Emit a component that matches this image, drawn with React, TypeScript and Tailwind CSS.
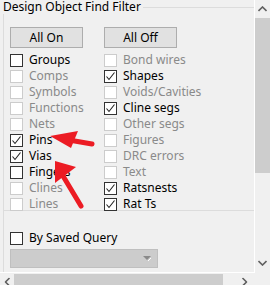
import React from "react";

type Item = { label: string; checked?: boolean; disabled?: boolean };

const leftItems: Item[] = [
  { label: "Groups" },
  { label: "Comps", disabled: true },
  { label: "Symbols", disabled: true },
  { label: "Functions", disabled: true },
  { label: "Nets", disabled: true },
  { label: "Pins", checked: true },
  { label: "Vias", checked: true },
  { label: "Fingers" },
  { label: "Clines", disabled: true },
  { label: "Lines", disabled: true },
];

const rightItems: Item[] = [
  { label: "Bond wires", disabled: true },
  { label: "Shapes", checked: true },
  { label: "Voids/Cavities", disabled: true },
  { label: "Cline segs", checked: true },
  { label: "Other segs", disabled: true },
  { label: "Figures", disabled: true },
  { label: "DRC errors", disabled: true },
  { label: "Text", disabled: true },
  { label: "Ratsnests", checked: true },
  { label: "Rat Ts", checked: true },
];

function CheckBox({ checked, disabled }: { checked?: boolean; disabled?: boolean }) {
  return (
    <span
      className={
        "flex size-[13px] shrink-0 items-center justify-center border bg-white " +
        (disabled ? "border-[#cccccc]" : "border-[#333333]")
      }
    >
      {checked ? (
        <svg width="11" height="11" viewBox="0 0 11 11" fill="none">
          <path d="M1.5 5.5 L4 8.5 L9.5 1.5" stroke="#222" strokeWidth="1.1" />
        </svg>
      ) : null}
    </span>
  );
}

function CheckRow({ item }: { item: Item }) {
  return (
    <div className="flex h-[16px] items-center gap-[6px]">
      <CheckBox checked={item.checked} disabled={item.disabled} />
      <span className={item.disabled ? "text-[#8a8a8a]" : "text-black"}>{item.label}</span>
    </div>
  );
}

function WinButton({ label }: { label: string }) {
  return (
    <button
      type="button"
      className="flex h-[21px] w-[73px] items-center justify-center border border-[#adadad] bg-[#e1e1e1] text-black"
    >
      {label}
    </button>
  );
}

function Chevron({ rotate }: { rotate: string }) {
  return (
    <svg width="9" height="6" viewBox="0 0 9 6" className={rotate}>
      <path d="M0.5 5 L4.5 1 L8.5 5" stroke="#606060" strokeWidth="1.6" fill="none" />
    </svg>
  );
}

function RedArrows() {
  return (
    <svg
      className="pointer-events-none absolute left-0 top-0"
      width="270"
      height="285"
      viewBox="0 0 270 285"
    >
      <line x1="66" y1="139.5" x2="92" y2="144" stroke="#ec1c24" strokeWidth="5" strokeLinecap="round" />
      <polygon points="50,136 78,131 71,148" fill="#ec1c24" />
      <line x1="63" y1="176" x2="81" y2="206" stroke="#ec1c24" strokeWidth="5" strokeLinecap="round" />
      <polygon points="55,161 76,167 55,183" fill="#ec1c24" />
    </svg>
  );
}

export default function App() {
  return (
    <div
      className="relative grid h-[285px] w-[270px] grid-cols-[255px_15px] grid-rows-[273px_12px] overflow-hidden bg-[#f0f0f0] text-[12px] leading-[16px]"
      style={{ fontFamily: '"Noto Sans", "Open Sans", sans-serif' }}
    >
      <div className="flex flex-col border-r border-b border-white">
        <div className="flex h-[14px] items-center">
          <span className="pl-[3px] pr-[2px] leading-[14px] text-black">Design Object Find Filter</span>
          <span className="mt-[1px] h-px flex-1 bg-[#dcdcdc]" />
        </div>
        <div className="ml-[3px] flex h-[197px] flex-col border-l border-b border-[#dcdcdc] pl-[6px] pt-[13px]">
          <div className="grid grid-cols-[94px_94px]">
            <WinButton label="All On" />
            <WinButton label="All Off" />
          </div>
          <div className="mt-[4px] grid grid-cols-[94px_120px]">
            <div className="flex flex-col">
              {leftItems.map((item) => (
                <CheckRow key={item.label} item={item} />
              ))}
            </div>
            <div className="flex flex-col">
              {rightItems.map((item) => (
                <CheckRow key={item.label} item={item} />
              ))}
            </div>
          </div>
        </div>
        <div className="ml-[3px] flex flex-1 flex-col border-l border-[#dcdcdc] pl-[6px] pt-[19px]">
          <CheckRow item={{ label: "By Saved Query" }} />
          <div className="mt-[3px] flex h-[19px] w-[148px] items-center justify-end border border-[#bfbfbf] bg-[#cccccc] pr-[5px]">
            <svg width="9" height="6" viewBox="0 0 9 6">
              <path d="M0 0 H8 L4 4 Z" fill="#8a8a8a" />
              <path d="M5 5 L8 2" stroke="#ffffff" strokeWidth="1" />
            </svg>
          </div>
        </div>
      </div>

      <div className="flex flex-col items-stretch">
        <div className="flex h-[18px] items-center justify-center">
          <Chevron rotate="" />
        </div>
        <div className="h-[155px] bg-[#cdcdcd]" />
        <div className="flex flex-1 items-end justify-center pb-[7px]">
          <Chevron rotate="rotate-180" />
        </div>
      </div>

      <div className="flex items-center pt-[1px]">
        <div className="flex w-[14px] items-center justify-center pt-[4px]">
          <Chevron rotate="-rotate-90" />
        </div>
        <div className="h-full w-[209px] bg-[#cdcdcd]" />
        <div className="flex flex-1 items-center justify-center pt-[4px] pl-[10px]">
          <Chevron rotate="rotate-90" />
        </div>
      </div>
      <div />

      <RedArrows />
    </div>
  );
}
